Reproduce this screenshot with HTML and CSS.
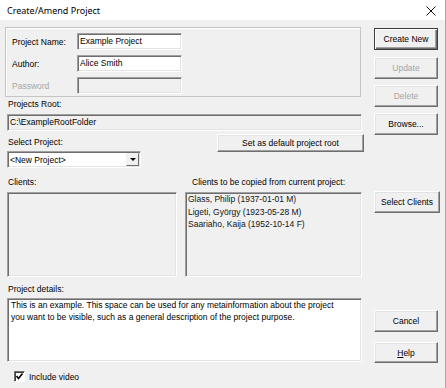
FILE: index.html
```html
<!DOCTYPE html>
<html lang="en">
<head>
    <meta charset="UTF-8">
    <title>Create/Amend Project</title>
    <link rel="stylesheet" href="styles.css">
</head>
<body>
<div class="window">
    <div class="titlebar">
        <span class="title">Create/Amend Project</span>
        <svg class="close-icon" width="10" height="10" viewBox="0 0 10 10">
            <path d="M0.5 0.5 L9.5 9.5 M9.5 0.5 L0.5 9.5" stroke="#111" stroke-width="1" fill="none"/>
        </svg>
    </div>

    <div class="dialog">
        <!-- left column -->
        <div class="main-col">
            <div class="group-box">
                <div class="form-row">
                    <span class="row-label">Project Name:</span>
                    <div class="field field-white">Example Project</div>
                </div>
                <div class="form-row">
                    <span class="row-label">Author:</span>
                    <div class="field field-white">Alice Smith</div>
                </div>
                <div class="form-row">
                    <span class="row-label disabled">Password</span>
                    <div class="field"></div>
                </div>
            </div>

            <div class="label label-root">Projects Root:</div>
            <div class="field field-wide">C:\ExampleRootFolder</div>

            <div class="select-row">
                <span class="label">Select Project:</span>
                <div class="btn btn-root">Set as default project root</div>
            </div>
            <div class="combo">
                <span class="combo-text">&lt;New Project&gt;</span>
                <span class="combo-btn"><span class="combo-arrow"></span></span>
            </div>

            <div class="lists-labels">
                <span class="label list-label-left">Clients:</span>
                <span class="label">Clients to be copied from current project:</span>
            </div>
            <div class="lists">
                <div class="listbox listbox-left"></div>
                <div class="listbox listbox-right">
                    <div class="list-item">Glass, Philip (1937-01-01 M)</div>
                    <div class="list-item">Ligeti, György (1923-05-28 M)</div>
                    <div class="list-item">Saariaho, Kaija (1952-10-14 F)</div>
                </div>
            </div>

            <div class="label label-details">Project details:</div>
            <div class="details">This is an example. This space can be used for any metainformation about the project you want to be visible, such as a general description of the project purpose.</div>

            <div class="check-row">
                <span class="checkbox">
                    <svg width="9" height="9" viewBox="0 0 9 9">
                        <path d="M1.5 4 L3.5 6.5 L7.5 1.5" stroke="#000" stroke-width="1.6" fill="none"/>
                    </svg>
                </span>
                <span class="check-label">Include video</span>
            </div>
        </div>

        <!-- right column -->
        <div class="side-col">
            <div class="btn btn-default btn-create">Create New</div>
            <div class="btn btn-disabled btn-update">Update</div>
            <div class="btn btn-disabled btn-delete">Delete</div>
            <div class="btn btn-browse">Browse...</div>
            <div class="btn btn-clients">Select Clients</div>
            <div class="btn btn-cancel">Cancel</div>
            <div class="btn btn-help"><u>H</u>elp</div>
        </div>
    </div>
</div>
</body>
</html>
```

FILE: styles.css
```css
body {
    margin: 0;
    background: #f0f0f0;
    font-family: "Liberation Sans", Arial, sans-serif;
    font-size: 8.5px;
    color: #000;
}

.window {
    width: 446px;
    height: 388px;
    box-sizing: border-box;
    border-right: 1px solid #a8a8a8;
    background: #f0f0f0;
    overflow: hidden;
}

.titlebar {
    height: 20px;
    background: #fff;
    display: flex;
    align-items: center;
    justify-content: space-between;
    padding: 0 9px 0 7px;
}

.title {
    font-family: "Noto Sans", sans-serif;
    font-size: 9px;
    color: #000;
}

.close-icon {
    margin-top: 1px;
}

.dialog {
    display: flex;
    padding-left: 5px;
}

.main-col {
    width: 359px;
}

.side-col {
    margin-left: 10px;
    width: 66px;
    display: flex;
    flex-direction: column;
}

/* group box */
.group-box {
    margin-top: 7px;
    width: 356px;
    height: 70px;
    box-sizing: border-box;
    border: 1px solid #c4c4c4;
    box-shadow: inset 1px 1px #fff;
    padding: 5px 0 0 6px;
}

.form-row {
    display: flex;
    align-items: center;
    height: 17px;
    margin-bottom: 5px;
}

.row-label {
    width: 65px;
}

.disabled {
    color: #a6a6a6;
}

/* sunken fields */
.field {
    height: 17px;
    width: 105px;
    box-sizing: border-box;
    border: 1px solid;
    border-color: #a0a0a0 #fff #fff #a0a0a0;
    box-shadow: inset 1px 1px #6e6e6e, inset -1px -1px #e3e3e3;
    background: #f0f0f0;
    padding: 0 2px;
    line-height: 15px;
    white-space: nowrap;
}

.field-white {
    background: #fff;
}

.field-wide {
    width: 355px;
    margin: 4px 0 0 2px;
}

.label {
    line-height: 12px;
}

.label-root {
    margin-top: 1px;
    padding-left: 3px;
}

.select-row {
    display: flex;
    justify-content: space-between;
    align-items: flex-start;
    height: 17px;
    margin-top: 3px;
    padding-left: 3px;
}

.select-row .label {
    margin-top: 2px;
}

/* raised buttons */
.btn {
    height: 22px;
    box-sizing: border-box;
    border: 1px solid;
    border-color: #fff #6e6e6e #6e6e6e #fff;
    box-shadow: inset -1px -1px #a0a0a0, inset 1px 1px #e3e3e3;
    background: #f0f0f0;
    display: flex;
    align-items: center;
    justify-content: center;
    white-space: nowrap;
    width: 64px;
}

.btn-root {
    width: 147px;
    height: 18px;
}

.btn-default {
    border: 1px solid #3c3c3c;
    box-shadow: inset 1px 1px #fff, inset -1px -1px #6e6e6e, inset -2px -2px #a0a0a0;
}

.btn-disabled {
    color: #a6a6a6;
}

.btn-create { margin-top: 8px; }
.btn-update { margin-top: 7px; }
.btn-delete { margin-top: 6px; }
.btn-browse { margin-top: 6px; }
.btn-clients { margin-top: 56px; width: 66px; }
.btn-cancel { margin-top: 97px; }
.btn-help { margin-top: 10px; height: 21px; }

/* combo box */
.combo {
    margin-left: 2px;
    width: 134px;
    height: 17px;
    box-sizing: border-box;
    border: 1px solid;
    border-color: #a0a0a0 #fff #fff #a0a0a0;
    box-shadow: inset 1px 1px #6e6e6e, inset -1px -1px #e3e3e3;
    background: #fff;
    display: flex;
    align-items: center;
    padding: 1px 1px 1px 2px;
}

.combo-text {
    flex: 1;
}

.combo-btn {
    width: 13px;
    height: 13px;
    box-sizing: border-box;
    border: 1px solid;
    border-color: #f0f0f0 #6e6e6e #6e6e6e #f0f0f0;
    background: #f0f0f0;
    display: flex;
    align-items: center;
    justify-content: center;
}

.combo-arrow {
    width: 0;
    height: 0;
    border-left: 3px solid transparent;
    border-right: 3px solid transparent;
    border-top: 3px solid #000;
}

/* lists */
.lists-labels {
    display: flex;
    margin-top: 8px;
    padding-left: 3px;
}

.list-label-left {
    width: 184px;
}

.lists {
    display: flex;
    gap: 8px;
    margin: 4px 0 0 2px;
}

.listbox {
    height: 85px;
    box-sizing: border-box;
    border: 1px solid;
    border-color: #a0a0a0 #fff #fff #a0a0a0;
    box-shadow: inset 1px 1px #6e6e6e, inset -1px -1px #e3e3e3;
    background: #f0f0f0;
    padding: 0 2px;
}

.listbox-left {
    width: 170px;
}

.listbox-right {
    width: 177px;
}

.list-item {
    line-height: 12.5px;
    color: #141414;
}

.label-details {
    margin-top: 6px;
    padding-left: 3px;
}

.details {
    margin: 3px 0 0 2px;
    width: 355px;
    height: 64px;
    box-sizing: border-box;
    border: 1px solid;
    border-color: #a0a0a0 #fff #fff #a0a0a0;
    box-shadow: inset 1px 1px #6e6e6e, inset -1px -1px #e3e3e3;
    background: #fff;
    padding: 1px 14px 1px 3px;
    line-height: 11.7px;
}

/* checkbox */
.check-row {
    display: flex;
    align-items: center;
    margin: 9px 0 0 9px;
}

.checkbox {
    width: 11px;
    height: 11px;
    box-sizing: border-box;
    border: 1px solid;
    border-color: #6e6e6e #fff #fff #6e6e6e;
    box-shadow: inset 1px 1px #404040;
    background: #fff;
    display: flex;
    align-items: center;
    justify-content: center;
}

.check-label {
    margin-left: 4px;
}
```
